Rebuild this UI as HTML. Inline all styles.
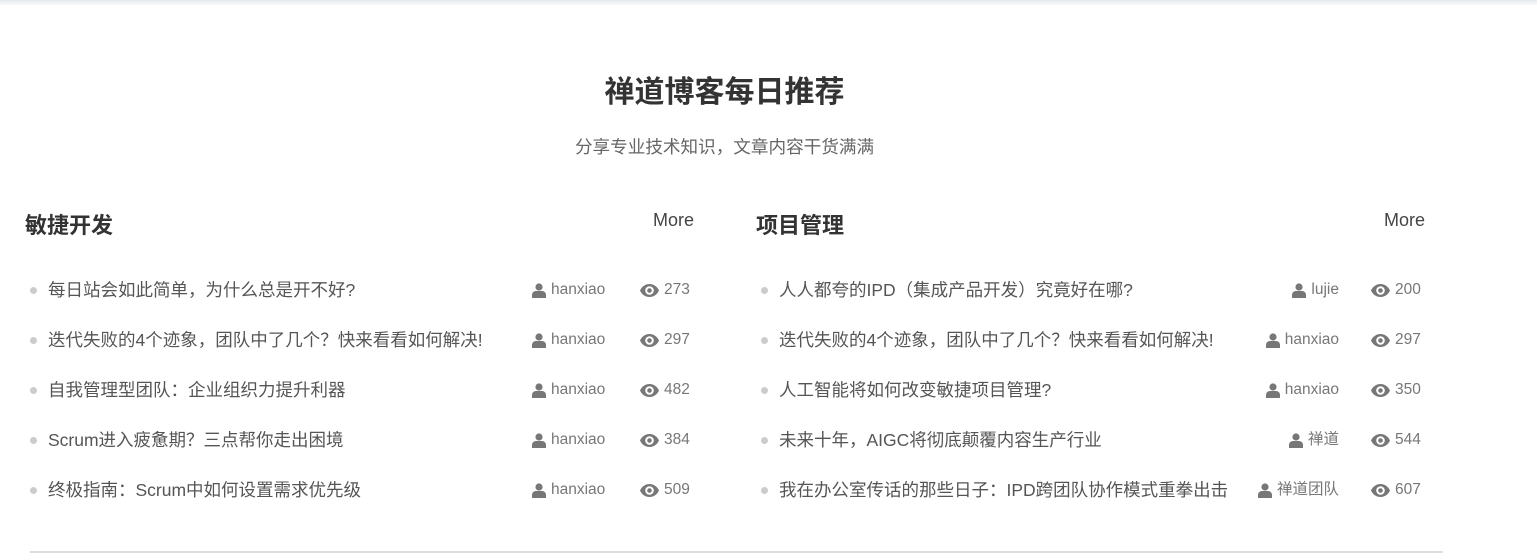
<!DOCTYPE html><html><head><meta charset="utf-8"><style>
*{margin:0;padding:0;box-sizing:border-box}
body{width:1537px;height:559px;background:#fff;position:relative;overflow:hidden;font-family:"Liberation Sans","Noto Sans CJK SC",sans-serif;color:#333}
.top{position:absolute;left:0;top:0;width:1537px;height:6px;background:linear-gradient(#e4e8ee,#fff)}
h1{position:absolute;left:0;width:1449px;top:73px;text-align:center;font-size:30px;font-weight:bold;color:#333;line-height:40px}
.sub{position:absolute;left:0;width:1449px;top:136px;text-align:center;font-size:17.6px;color:#666;line-height:22px}
.col{position:absolute;top:0;width:669px}
.h{position:absolute;top:211px;font-size:22px;font-weight:bold;color:#333;line-height:30px}
.more{position:absolute;right:0;top:208px;font-size:18px;color:#444;line-height:24px}
.row{position:absolute;left:0;width:669px;height:24px;font-size:17.5px;color:#555;line-height:24px}
.dot{position:absolute;left:5px;top:9px;width:7px;height:7px;border-radius:50%;background:#ccc}
.t{position:absolute;left:23px;white-space:nowrap}
.meta{position:absolute;font-size:15.5px;color:#777;white-space:nowrap;display:flex;align-items:center;gap:5px}
svg{fill:#777}
.line{position:absolute;left:30px;top:551px;width:1413px;height:2px;background:#ddd}
</style></head><body>
<div class="top"></div>
<h1>禅道博客每日推荐</h1>
<div class="sub">分享专业技术知识，文章内容干货满满</div>
<div class="line"></div>
<div id="L" class="col" style="left:25px">
<div class="h" style="left:0">敏捷开发</div><div class="more">More</div>
</div>
<div id="R" class="col" style="left:756px">
<div class="h" style="left:0">项目管理</div><div class="more">More</div>
</div>
<script>
var user='<svg width="14" height="15" viewBox="0 0 14 15"><circle cx="7" cy="4" r="3.6"/><path d="M0 15v-3c0-2.5 2-4 4-4h6c2 0 4 1.5 4 4v3z"/></svg>';
var eye='<svg width="19" height="13" viewBox="0 0 19 13"><path d="M9.5 0C5 0 1.5 3 0 6.5 1.5 10 5 13 9.5 13S17.5 10 19 6.5C17.5 3 14 0 9.5 0zm0 2.2a4.3 4.3 0 1 1 0 8.6 4.3 4.3 0 0 1 0-8.6zm0 2a2.3 2.3 0 1 0 0 4.6 2.3 2.3 0 0 0 0-4.6z" fill-rule="evenodd"/></svg>';
var L=[["每日站会如此简单，为什么总是开不好?","hanxiao","273"],["迭代失败的4个迹象，团队中了几个？快来看看如何解决!","hanxiao","297"],["自我管理型团队：企业组织力提升利器","hanxiao","482"],["Scrum进入疲惫期？三点帮你走出困境","hanxiao","384"],["终极指南：Scrum中如何设置需求优先级","hanxiao","509"]];
var R=[["人人都夸的IPD（集成产品开发）究竟好在哪?","lujie","200"],["迭代失败的4个迹象，团队中了几个？快来看看如何解决!","hanxiao","297"],["人工智能将如何改变敏捷项目管理?","hanxiao","350"],["未来十年，AIGC将彻底颠覆内容生产行业","禅道","544"],["我在办公室传话的那些日子：IPD跨团队协作模式重拳出击","禅道团队","607"]];
function fill(id,d,authorRight){var c=document.getElementById(id),h='';d.forEach(function(r,i){var y=278+i*50;
var a=authorRight?'<div class="meta" style="right:86px;top:0">'+user+'<span>'+r[1]+'</span></div>':'<div class="meta" style="left:507px;top:0">'+user+'<span>'+r[1]+'</span></div>';
h+='<div class="row" style="top:'+y+'px"><span class="dot"></span><span class="t">'+r[0]+'</span>'+a+'<div class="meta" style="left:615px;top:0">'+eye+'<span>'+r[2]+'</span></div></div>';});c.insertAdjacentHTML('beforeend',h);}
fill('L',L,false);fill('R',R,true);
</script>
</body></html>
